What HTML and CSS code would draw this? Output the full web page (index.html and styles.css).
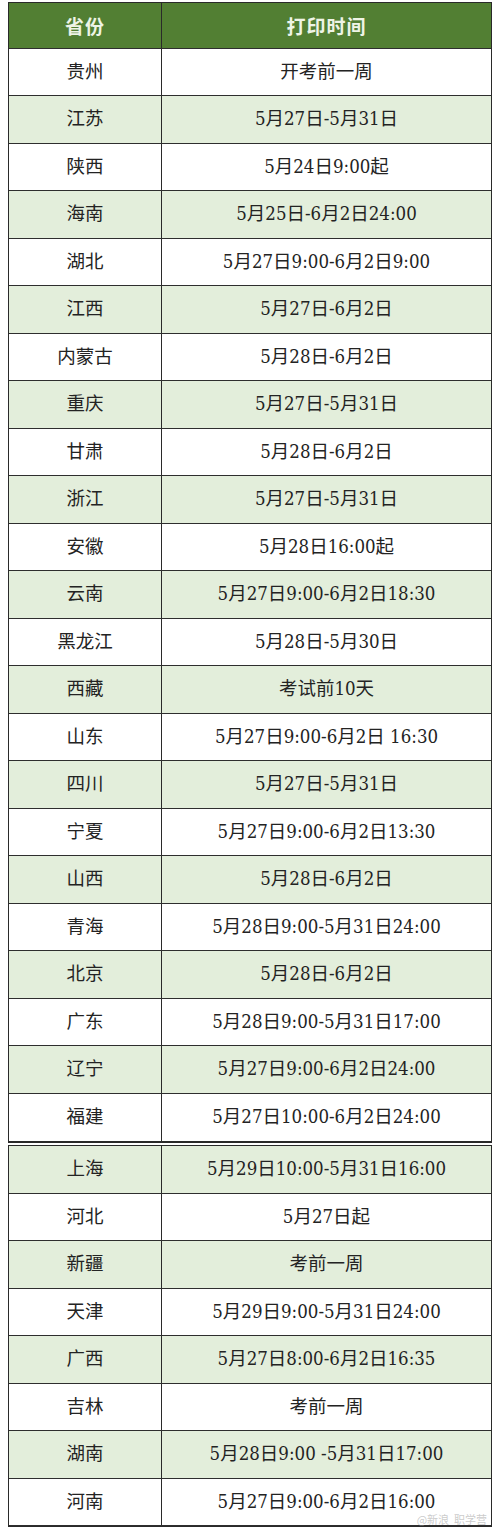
FILE: index.html
```html
<!DOCTYPE html>
<html lang="zh-CN">
<head>
<meta charset="utf-8">
<title>准考证打印时间</title>
<link rel="stylesheet" href="styles.css">
</head>
<body>
<div class="sheet">
  <div class="table first">
    <div class="row head"><div class="cell prov">省份</div><div class="cell time">打印时间</div></div>
    <div class="row"><div class="cell prov">贵州</div><div class="cell time">开考前一周</div></div>
    <div class="row alt"><div class="cell prov">江苏</div><div class="cell time">5月27日-5月31日</div></div>
    <div class="row"><div class="cell prov">陕西</div><div class="cell time">5月24日9:00起</div></div>
    <div class="row alt"><div class="cell prov">海南</div><div class="cell time">5月25日-6月2日24:00</div></div>
    <div class="row"><div class="cell prov">湖北</div><div class="cell time">5月27日9:00-6月2日9:00</div></div>
    <div class="row alt"><div class="cell prov">江西</div><div class="cell time">5月27日-6月2日</div></div>
    <div class="row"><div class="cell prov">内蒙古</div><div class="cell time">5月28日-6月2日</div></div>
    <div class="row alt"><div class="cell prov">重庆</div><div class="cell time">5月27日-5月31日</div></div>
    <div class="row"><div class="cell prov">甘肃</div><div class="cell time">5月28日-6月2日</div></div>
    <div class="row alt"><div class="cell prov">浙江</div><div class="cell time">5月27日-5月31日</div></div>
    <div class="row"><div class="cell prov">安徽</div><div class="cell time">5月28日16:00起</div></div>
    <div class="row alt"><div class="cell prov">云南</div><div class="cell time">5月27日9:00-6月2日18:30</div></div>
    <div class="row"><div class="cell prov">黑龙江</div><div class="cell time">5月28日-5月30日</div></div>
    <div class="row alt"><div class="cell prov">西藏</div><div class="cell time">考试前10天</div></div>
    <div class="row"><div class="cell prov">山东</div><div class="cell time">5月27日9:00-6月2日&nbsp;16:30</div></div>
    <div class="row alt"><div class="cell prov">四川</div><div class="cell time">5月27日-5月31日</div></div>
    <div class="row"><div class="cell prov">宁夏</div><div class="cell time">5月27日9:00-6月2日13:30</div></div>
    <div class="row alt"><div class="cell prov">山西</div><div class="cell time">5月28日-6月2日</div></div>
    <div class="row"><div class="cell prov">青海</div><div class="cell time">5月28日9:00-5月31日24:00</div></div>
    <div class="row alt"><div class="cell prov">北京</div><div class="cell time">5月28日-6月2日</div></div>
    <div class="row"><div class="cell prov">广东</div><div class="cell time">5月28日9:00-5月31日17:00</div></div>
    <div class="row alt"><div class="cell prov">辽宁</div><div class="cell time">5月27日9:00-6月2日24:00</div></div>
    <div class="row"><div class="cell prov">福建</div><div class="cell time">5月27日10:00-6月2日24:00</div></div>
  </div>
  <div class="table second">
    <div class="row alt"><div class="cell prov">上海</div><div class="cell time">5月29日10:00-5月31日16:00</div></div>
    <div class="row"><div class="cell prov">河北</div><div class="cell time">5月27日起</div></div>
    <div class="row alt"><div class="cell prov">新疆</div><div class="cell time">考前一周</div></div>
    <div class="row"><div class="cell prov">天津</div><div class="cell time">5月29日9:00-5月31日24:00</div></div>
    <div class="row alt"><div class="cell prov">广西</div><div class="cell time">5月27日8:00-6月2日16:35</div></div>
    <div class="row"><div class="cell prov">吉林</div><div class="cell time">考前一周</div></div>
    <div class="row alt"><div class="cell prov">湖南</div><div class="cell time">5月28日9:00&nbsp;-5月31日17:00</div></div>
    <div class="row"><div class="cell prov">河南</div><div class="cell time">5月27日9:00-6月2日16:00</div></div>
    <div class="watermark">@新浪&nbsp;&nbsp;职学营</div>
  </div>
</div>
</body>
</html>
```
FILE: styles.css
```css
html, body {
  margin: 0;
  padding: 0;
  background: #ffffff;
}

.sheet {
  width: 484px;
  margin-left: 8px;
  padding-top: 2px;
  font-family: "DejaVu Serif Condensed", "DejaVu Serif", "Noto Sans CJK SC", serif;
  font-stretch: condensed;
  color: #232323;
}

.table {
  position: relative;
  border: 1px solid #2a2a2a;
}

.table.first {
  border-bottom-width: 2px;
}

.table.second {
  margin-top: 2px;
}

.row {
  display: grid;
  grid-template-columns: 153px 1fr;
  height: 47.5px;
  box-sizing: border-box;
  border-bottom: 1px solid #2e2e2e;
  background: #ffffff;
}

.row:last-of-type {
  border-bottom: none;
}

.row.alt {
  background: #e3eedb;
}

.row.head {
  height: 45.5px;
  background: #527f33;
}

.cell {
  display: flex;
  align-items: center;
  justify-content: center;
  font-size: 18.5px;
  line-height: 1;
  white-space: nowrap;
}

.cell.prov {
  border-right: 1px solid #2a2a2a;
}

.head .cell {
  font-family: "Noto Sans CJK SC", sans-serif;
  font-weight: 700;
  color: #eef4e6;
  font-size: 19px;
  letter-spacing: 1px;
}

.watermark {
  position: absolute;
  right: 4px;
  bottom: 1px;
  font-family: "Noto Sans CJK SC", sans-serif;
  font-size: 11px;
  line-height: 11px;
  color: rgba(150, 150, 150, 0.5);
  white-space: nowrap;
}
```
